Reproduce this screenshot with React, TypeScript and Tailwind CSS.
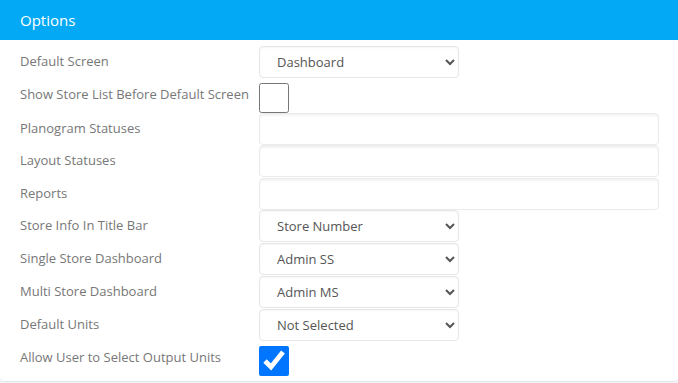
import React from "react";

type Row =
  | { label: string; kind: "select"; value: string }
  | { label: string; kind: "check"; checked: boolean }
  | { label: string; kind: "text" };

const rows: Row[] = [
  { label: "Default Screen", kind: "select", value: "Dashboard" },
  { label: "Show Store List Before Default Screen", kind: "check", checked: false },
  { label: "Planogram Statuses", kind: "text" },
  { label: "Layout Statuses", kind: "text" },
  { label: "Reports", kind: "text" },
  { label: "Store Info In Title Bar", kind: "select", value: "Store Number" },
  { label: "Single Store Dashboard", kind: "select", value: "Admin SS" },
  { label: "Multi Store Dashboard", kind: "select", value: "Admin MS" },
  { label: "Default Units", kind: "select", value: "Not Selected" },
  { label: "Allow User to Select Output Units", kind: "check", checked: true },
];

const Field = ({ row }: { row: Row }) => {
  if (row.kind === "select") {
    return (
      <select
        defaultValue={row.value}
        className="w-[200px] h-[32px] pl-[13px] pr-2 rounded border border-[#e6e6e6] bg-white text-[13px] text-[#555] shadow-[inset_0_1px_2px_rgba(0,0,0,0.04)]"
      >
        <option>{row.value}</option>
      </select>
    );
  }
  if (row.kind === "check") {
    return (
      <input
        type="checkbox"
        defaultChecked={row.checked}
        className="w-[30px] h-[30px] m-0 mt-[4px]"
      />
    );
  }
  return (
    <input
      type="text"
      className="w-[400px] h-[32px] rounded border border-[#ebebeb] bg-white shadow-[inset_0_2px_2px_rgba(0,0,0,0.05)]"
    />
  );
};

const rowHeight = (row: Row, i: number) => {
  if (row.kind === "check") return i === 1 ? "h-[34px]" : "h-[38px]";
  if (row.kind === "text") return i === 3 ? "h-[33px]" : "h-[32px]";
  return "h-[33px]";
};

export default function App() {
  return (
    <div className="w-[678px] h-[383px] bg-[#f1f3f5] font-['Open_Sans',sans-serif]">
      <div className="bg-white rounded-b border-b border-[#e3e6ea] h-[382px]">
        <div className="h-[40px] bg-[#03a9f4] flex items-center px-5">
          <h2 className="text-white text-[15px] leading-none">Options</h2>
        </div>
        <div className="pt-[6px] pl-5 flex flex-col">
          {rows.map((row, i) => (
            <div key={row.label} className={`flex items-start ${rowHeight(row, i)}`}>
              <div className="w-[239px] text-[13px] text-[#777] pt-[6px]">
                {row.label}
              </div>
              <Field row={row} />
            </div>
          ))}
        </div>
      </div>
    </div>
  );
}
